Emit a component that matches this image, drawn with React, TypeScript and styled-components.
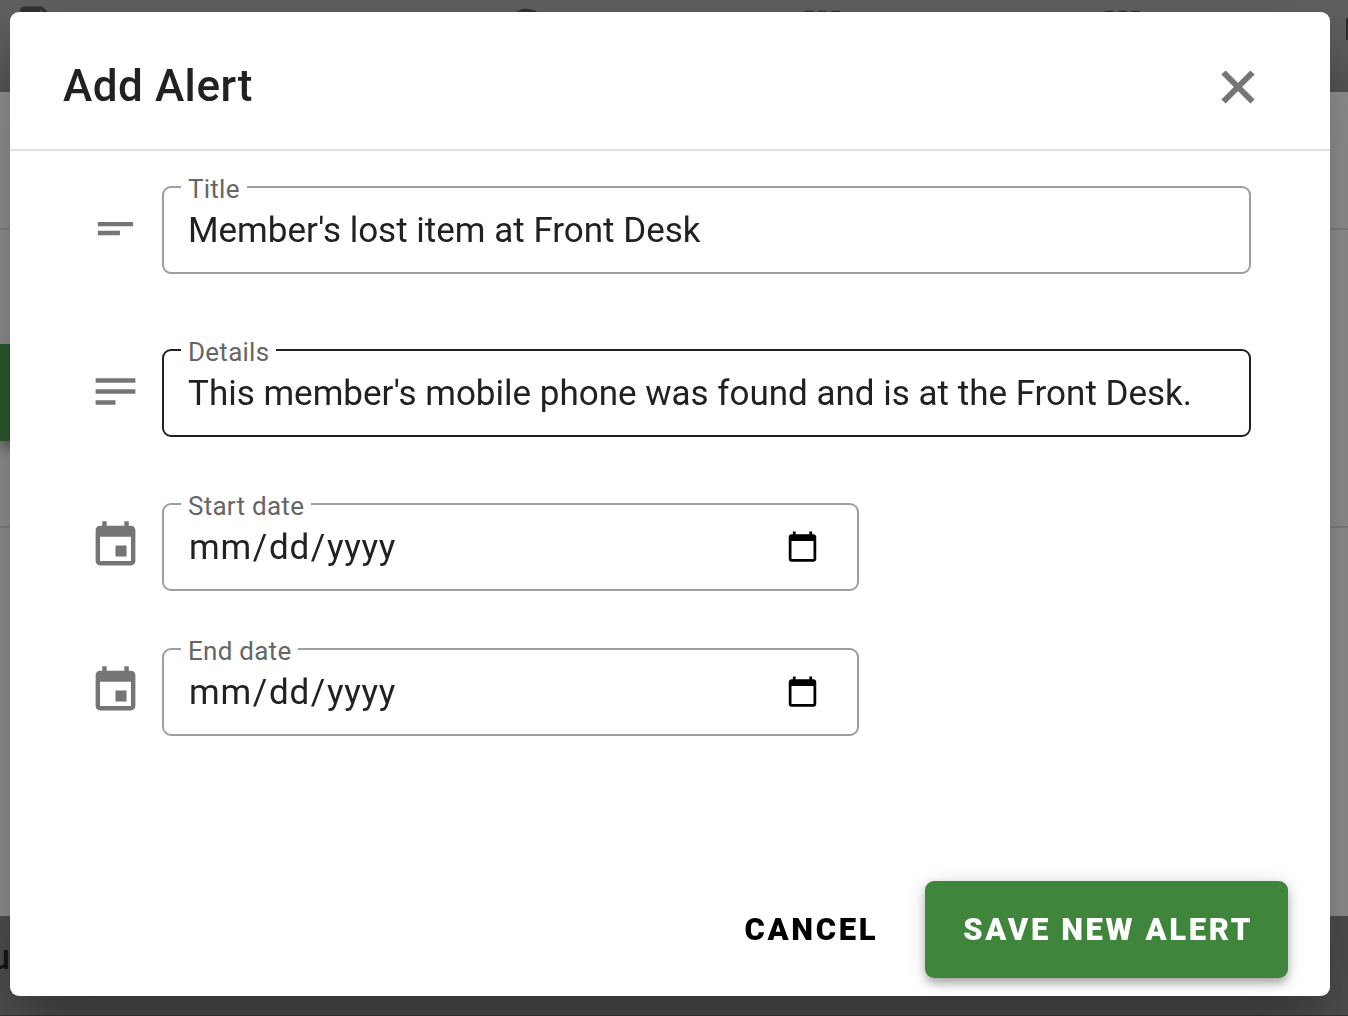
import React from "react";
import styled, { createGlobalStyle } from "styled-components";

const GlobalStyle = createGlobalStyle`
  *, *::before, *::after { box-sizing: border-box; }
  html, body, #root { height: 100%; }
  body {
    margin: 0;
    overflow: hidden;
    background: #fff;
    color: #212121;
    font-family: Roboto, "Liberation Sans", sans-serif;
    -webkit-font-smoothing: antialiased;
  }
`;

const Page = styled.div`
  display: flex;
  flex-direction: column;
  min-height: 100vh;
  background: #dadada;
`;

const TopBar = styled.div`
  display: flex;
  height: 92px;
  padding: 2px 0 0 9px;
  overflow: hidden;
  background: linear-gradient(#909090, #888 70%, #7e7e7e);
  color: #4a4a4a;
`;

const TabSlot = styled.div<{ $share: number }>`
  flex: ${(p) => p.$share} 1 0;
  min-width: 0;
`;

const TopIcon = styled.svg`
  width: 53px;
  height: 53px;
  flex: none;
  fill: currentColor;
`;

const TopLink = styled.span`
  flex: none;
  width: 2px;
  height: 22px;
  margin-top: 16px;
  background: #424242;
`;

const Section = styled.div<{ $grow?: boolean; $height?: number }>`
  flex: ${(p) => (p.$grow ? "1" : "none")};
  height: ${(p) => (p.$height ? `${p.$height}px` : "auto")};
  border-bottom: ${(p) => (p.$grow ? "0" : "2px solid #c0c0c0")};
`;

const ActionSection = styled(Section)`
  padding-top: 114px;
`;

const PageAction = styled.div`
  width: 220px;
  height: 97px;
  background: #428646;
  box-shadow: 0 7px 9px -2px rgba(0, 0, 0, 0.2), 0 9px 11px rgba(0, 0, 0, 0.14), 0 2px 22px rgba(0, 0, 0, 0.12);
`;

const Footer = styled.div`
  height: 100px;
  padding-top: 18px;
  border-bottom: 1px solid #555;
  background: #767676;
  font-size: 35px;
  line-height: 48px;
  font-weight: 500;
`;

const FooterText = styled.div`
  width: 10px;
  display: flex;
  justify-content: flex-end;
`;

const Scrim = styled.div`
  position: fixed;
  inset: 0;
  display: flex;
  align-items: flex-start;
  padding: 12px 18px 20px 10px;
  background: rgba(0, 0, 0, 0.32);
`;

const Dialog = styled.form`
  flex: 1;
  min-width: 0;
  border-radius: 9px;
  background: #fff;
  box-shadow:
    0 24px 33px -15px rgba(0, 0, 0, 0.2),
    0 53px 84px 7px rgba(0, 0, 0, 0.14),
    0 20px 101px 18px rgba(0, 0, 0, 0.12);
`;

const Header = styled.header`
  display: flex;
  align-items: center;
  justify-content: space-between;
  padding: 46px 66px 34px 53px;
  border-bottom: 2px solid #e0e0e0;
`;

const Heading = styled.h2`
  margin: 0;
  font-size: 44px;
  line-height: 57px;
  font-weight: 500;
  letter-spacing: 0.0125em;
`;

const CloseButton = styled.button`
  display: flex;
  padding: 9px;
  border: 0;
  background: none;
  color: #757575;
  cursor: pointer;
`;

const Fields = styled.div`
  display: flex;
  flex-direction: column;
  gap: 66px;
  padding: 35px 79px 145px;
`;

const FieldGroup = styled.div<{ $gap: number }>`
  display: flex;
  flex-direction: column;
  gap: ${(p) => p.$gap}px;
`;

const Row = styled.div`
  display: flex;
  align-items: center;
  gap: 20px;
`;

const RowIcon = styled.svg`
  flex: none;
  width: 53px;
  height: 53px;
  margin-bottom: 4px;
  fill: #757575;
`;

const FieldArea = styled.div`
  flex: 1;
  min-width: 0;
`;

const Outline = styled.div<{ $narrow?: boolean; $active?: boolean }>`
  position: relative;
  width: ${(p) => (p.$narrow ? "64%" : "100%")};
  border: 2px solid ${(p) => (p.$active ? "#212121" : "#9e9e9e")};
  border-radius: 9px;
`;

const FloatingLabel = styled.label`
  position: absolute;
  top: -15px;
  left: 17px;
  padding: 0 7px;
  background: #fff;
  color: #666;
  font-size: 26px;
  line-height: 32px;
  letter-spacing: 0.01em;
`;

const Input = styled.input`
  display: block;
  width: 100%;
  height: 84px;
  padding: 0 35px 0 24px;
  border: 0;
  outline: 0;
  background: none;
  color: #212121;
  font: 400 35px Roboto, "Liberation Sans", sans-serif;

  &[type="date"] {
    letter-spacing: 0.02em;
  }
`;

const Actions = styled.footer`
  display: flex;
  justify-content: flex-end;
  gap: 18px;
  padding: 0 42px 18px;
`;

const Button = styled.button<{ $primary?: boolean }>`
  height: 97px;
  padding: ${(p) => (p.$primary ? "0 35px 0 38px" : "0 29px")};
  border: 0;
  border-radius: 9px;
  background: ${(p) => (p.$primary ? "#3f863c" : "transparent")};
  color: ${(p) => (p.$primary ? "#fff" : "#000")};
  box-shadow: ${(p) =>
    p.$primary
      ? "0 7px 9px -2px rgba(0,0,0,.2), 0 4px 11px rgba(0,0,0,.14), 0 2px 22px rgba(0,0,0,.12)"
      : "none"};
  font: 900 31px Roboto, "Liberation Sans", sans-serif;
  letter-spacing: 0.085em;
  text-transform: uppercase;
  cursor: pointer;
`;

const icons = {
  short: "M4 9h16v2H4V9zm0 4h10v2H4v-2z",
  notes: "M3 18h9v-2H3v2zM3 6v2h18V6H3zm0 7h18v-2H3v2z",
  event:
    "M17 12h-5v5h5v-5zM16 1v2H8V1H6v2H5c-1.11 0-1.99.9-1.99 2L3 19c0 1.1.89 2 2 2h14c1.1 0 2-.9 2-2V5c0-1.1-.9-2-2-2h-1V1h-2zm3 18H5V8h14v11z",
  file: "M15 2H7c-1.100 0-2 .900-2 2v16c0 1.100.900 2 2 2h12c1.100 0 2-.900 2-2V8l-6-6zm-1 7V3.500L19.500 9H14z",
  person: "M12 3a9 9 0 1 0 0 18 9 9 0 0 0 0-18z",
  grid: "M4 4h4v5H4V4zm6 0h4v5h-4V4zm6 0h4v5h-4V4z",
};

const tabs = [
  { name: "documents", icon: icons.file, share: 491 },
  { name: "profile", icon: icons.person, share: 296 },
  { name: "week", icon: icons.grid, share: 300 },
  { name: "month", icon: icons.grid, share: 250 },
];

interface FieldProps {
  id: string;
  label: string;
  icon: string;
  type?: string;
  value?: string;
  active?: boolean;
}

function Field({ id, label, icon, type = "text", value, active }: FieldProps) {
  return (
    <Row>
      <RowIcon viewBox="0 0 24 24" aria-hidden="true">
        <path d={icon} />
      </RowIcon>
      <FieldArea>
        <Outline $narrow={type === "date"} $active={active}>
          <FloatingLabel htmlFor={id}>{label}</FloatingLabel>
          <Input id={id} name={id} type={type} defaultValue={value} spellCheck={false} />
        </Outline>
      </FieldArea>
    </Row>
  );
}

export default function App() {
  return (
    <>
      <GlobalStyle />
      <Page aria-hidden="true">
        <TopBar>
          {tabs.map((tab) => (
            <TabSlot key={tab.name} $share={tab.share}>
              <TopIcon viewBox="0 0 24 24">
                <path d={tab.icon} />
              </TopIcon>
            </TabSlot>
          ))}
          <TopLink />
        </TopBar>
        <Section $height={138} />
        <ActionSection $height={298}>
          <PageAction />
        </ActionSection>
        <Section $grow />
        <Footer>
          <FooterText>u</FooterText>
        </Footer>
      </Page>
      <Scrim>
        <Dialog role="dialog" aria-modal="true" aria-labelledby="dialog-title" onSubmit={(e) => e.preventDefault()}>
          <Header>
            <Heading id="dialog-title">Add Alert</Heading>
            <CloseButton type="button" aria-label="Close">
              <svg width="34" height="34" viewBox="0 0 34 34" fill="none" stroke="currentColor" strokeWidth="6">
                <path d="M2.500 2.500 31.500 31.500M31.500 2.500 2.500 31.500" />
              </svg>
            </CloseButton>
          </Header>
          <Fields>
            <FieldGroup $gap={75}>
              <Field id="title" label="Title" icon={icons.short} value="Member's lost item at Front Desk" />
              <Field
                id="details"
                label="Details"
                icon={icons.notes}
                value="This member's mobile phone was found and is at the Front Desk."
                active
              />
            </FieldGroup>
            <FieldGroup $gap={57}>
              <Field id="start" label="Start date" icon={icons.event} type="date" />
              <Field id="end" label="End date" icon={icons.event} type="date" />
            </FieldGroup>
          </Fields>
          <Actions>
            <Button type="button">Cancel</Button>
            <Button type="submit" $primary>Save new alert</Button>
          </Actions>
        </Dialog>
      </Scrim>
    </>
  );
}
